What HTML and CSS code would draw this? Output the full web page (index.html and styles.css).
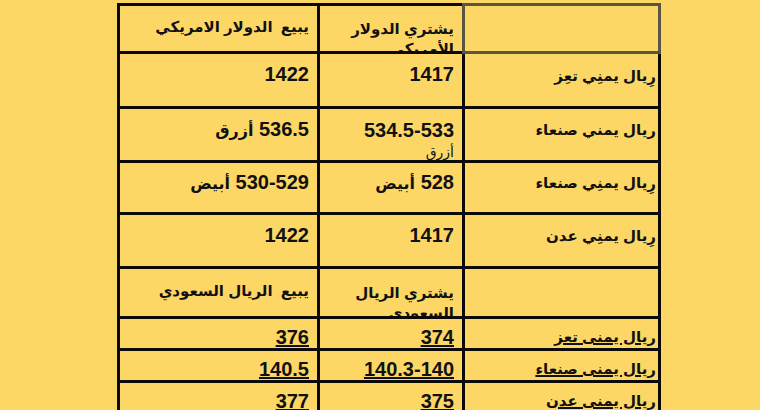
FILE: index.html
```html
<!DOCTYPE html>
<html lang="ar">
<head>
<meta charset="utf-8">
<title>أسعار الصرف</title>
<link rel="stylesheet" href="styles.css">
</head>
<body>
<div class="page">
<table class="rates" dir="rtl">
  <colgroup>
    <col class="c-label">
    <col class="c-buy">
    <col class="c-sell">
  </colgroup>
  <tbody>
    <tr class="r-head">
      <td class="corner"></td>
      <td class="hdr"><div class="clip clip-head">يشتري الدولار الأمريكي</div></td>
      <td class="hdr"><div class="one">يبيع&nbsp; الدولار الامريكي</div></td>
    </tr>
    <tr class="r-big">
      <td class="lbl">رِيال يمنِي تعِز</td>
      <td class="num">1417</td>
      <td class="num">1422</td>
    </tr>
    <tr class="r-big2">
      <td class="lbl">ريال يمني صنعاء</td>
      <td class="num"><div class="clip clip-blue">534.5-533 <span class="small">أزرق</span></div></td>
      <td class="num">536.5 <span class="w">أزرق</span></td>
    </tr>
    <tr class="r-mid">
      <td class="lbl">رِيال يمنِي صنعاء</td>
      <td class="num">528 <span class="w">أبيض</span></td>
      <td class="num">530-529 <span class="w">أبيض</span></td>
    </tr>
    <tr class="r-big2">
      <td class="lbl">رِيال يمنِي عدن</td>
      <td class="num">1417</td>
      <td class="num">1422</td>
    </tr>
    <tr class="r-head2">
      <td class="blank"></td>
      <td class="hdr"><div class="clip clip-head2">يشتري الريال السعودي</div></td>
      <td class="hdr"><div class="one">يبيع&nbsp; الريال السعودي</div></td>
    </tr>
    <tr class="r-small">
      <td class="lbl u">ريال يمنى تعز</td>
      <td class="num u">374</td>
      <td class="num u">376</td>
    </tr>
    <tr class="r-small">
      <td class="lbl u">ريال يمنى صنعاء</td>
      <td class="num u">140.3-140</td>
      <td class="num u">140.5</td>
    </tr>
    <tr class="r-small">
      <td class="lbl u">ريال يمنى عدن</td>
      <td class="num u">375</td>
      <td class="num u">377</td>
    </tr>
  </tbody>
</table>
</div>
</body>
</html>
```
FILE: styles.css
```css
html, body {
  margin: 0;
  padding: 0;
  background: #fdd766;
}
body {
  width: 760px;
  height: 410px;
  overflow: hidden;
  font-family: "Liberation Sans", "DejaVu Sans", sans-serif;
  color: #111;
}
.page {
  padding: 3px 0 0 117px;
}
.rates {
  border-collapse: collapse;
  table-layout: fixed;
  width: 541px;
}
.c-label { width: 196px; }
.c-buy { width: 145px; }
.c-sell { width: 200px; }

.rates td {
  border: 3px solid #0c0a06;
  padding: 0;
  vertical-align: middle;
  text-align: right;
  overflow: hidden;
}
.rates td.corner {
  border: 3px solid #5a5441;
}

.r-head { height: 46px; }
.r-big { height: 55px; }
.r-big2 { height: 54px; }
.r-mid { height: 52px; }
.r-head2 { height: 50px; }
.r-small { height: 32px; }

.hdr {
  font-size: 15px;
  font-weight: bold;
  padding-right: 8px !important;
}
.hdr .one {
  padding-bottom: 3px;
}
.clip {
  overflow: hidden;
  line-height: 20px;
}
.clip-head {
  box-sizing: border-box;
  padding-top: 13px;
  height: 45px;
}
.clip-head2 {
  box-sizing: border-box;
  height: 47px;
  padding-top: 14px;
}
.clip-blue {
  box-sizing: border-box;
  height: 51px;
  padding-top: 9px;
  line-height: 24px;
}
.clip-blue .small {
  display: block;
  font-size: 14px;
  font-weight: normal;
  letter-spacing: 2px;
  line-height: 20px;
}
.num {
  font-size: 20px;
  font-weight: bold;
  padding-right: 8px !important;
  padding-bottom: 11px !important;
}
.num .w {
  font-size: 16px;
}
.num .clip {
  margin-bottom: -11px;
}
.lbl {
  font-size: 15px;
  font-weight: bold;
  padding-right: 2px !important;
  padding-bottom: 9px !important;
}
.rates td.u {
  vertical-align: bottom;
  padding-bottom: 0 !important;
  line-height: 22px;
  text-decoration: underline;
  text-decoration-thickness: 2px;
  text-underline-offset: 1px;
}
```
